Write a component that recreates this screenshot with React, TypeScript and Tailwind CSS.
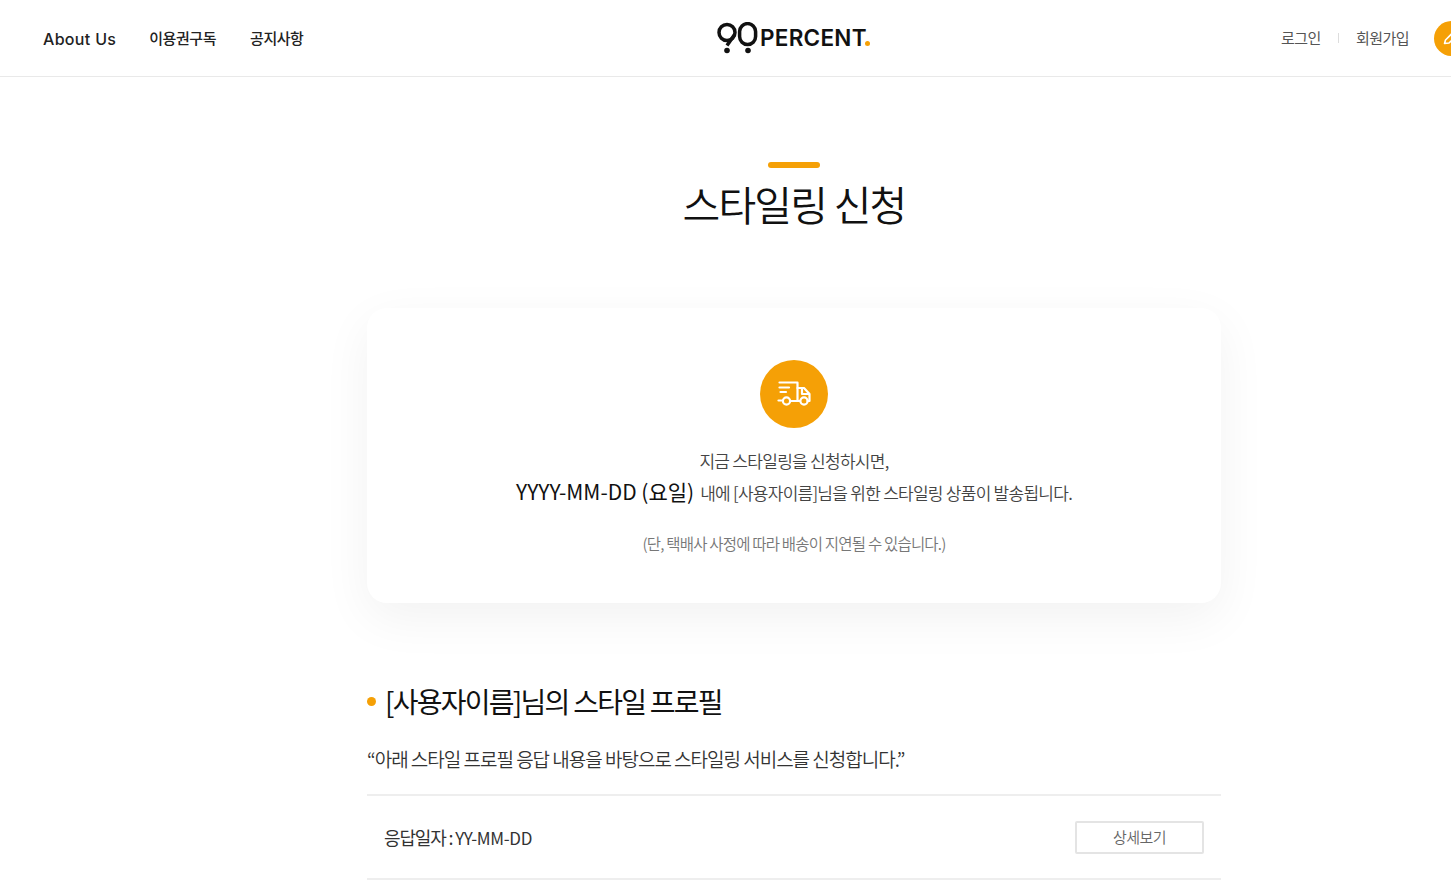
import React from "react";

const kr = "font-['Noto_Sans_CJK_KR','Noto_Sans',sans-serif]";

function Logo() {
  return (
    <div className="flex items-end">
      <svg width="42" height="32" viewBox="0 0 42 32" fill="none" className="block">
        <circle cx="10" cy="10.5" r="8" stroke="#111" strokeWidth="3.5" />
        <path d="M17.6 12.5 L10 23.5" stroke="#111" strokeWidth="3.5" />
        <circle cx="10" cy="28.5" r="2.8" fill="#111" />
        <rect x="22.6" y="1.6" width="16" height="21" rx="8" stroke="#111" strokeWidth="3.5" />
        <circle cx="31" cy="28.5" r="2.8" fill="#111" />
      </svg>
      <span className="ml-[1px] mb-[4px] text-[22.5px] leading-[24px] font-semibold tracking-[0.012em] text-[#111] font-['Inter',sans-serif]">PERCENT</span>
      <span className="mb-[8px] ml-[-2px] h-[5px] w-[5px] rounded-full bg-[#f5a006]" />
    </div>
  );
}

function TruckIcon() {
  return (
    <svg width="34" height="26" viewBox="0 0 34 26" fill="none" stroke="#fff" strokeWidth="2.2" strokeLinecap="round" strokeLinejoin="round">
      <path d="M2.5 1.5H20.5V19" />
      <path d="M2.5 6.5H12" />
      <path d="M3.5 11H9" />
      <path d="M1.5 19.5H4.5" />
      <path d="M14 20H23" />
      <path d="M20.5 7H27L32.5 13V20H30.5" />
      <path d="M25 7.5V13H32" />
      <circle cx="9.5" cy="20" r="3.6" />
      <circle cx="27" cy="20" r="3.6" />
    </svg>
  );
}

function Header() {
  return (
    <header className="relative flex h-[77px] items-center border-b border-[#e9e9e9] bg-white">
      <nav className="flex items-center pl-[43px] text-[#222]">
        <a className="font-['Inter',sans-serif] text-[16px] font-medium tracking-[0.02em] translate-y-[1px]">About Us</a>
        <a className={`${kr} ml-[33px] text-[15px] font-medium tracking-[-0.03em]`}>이용권구독</a>
        <a className={`${kr} ml-[34px] text-[15px] font-medium tracking-[-0.03em]`}>공지사항</a>
      </nav>
      <div className="absolute left-[717px] top-[22px]">
        <Logo />
      </div>
      <div className={`${kr} ml-auto flex items-center text-[15px] tracking-[-0.035em] text-[#555]`}>
        <a>로그인</a>
        <span className="mx-[17px] h-[10px] w-px bg-[#ddd]" />
        <a>회원가입</a>
        <span className="ml-[25px] mr-[-18px] flex h-[35px] w-[35px] items-center justify-start rounded-full bg-[#f5a006] pl-[9px]">
          <svg width="14" height="14" viewBox="0 0 14 14" fill="none" stroke="#fff" strokeWidth="1.6" strokeLinecap="round" strokeLinejoin="round">
            <path d="M1.5 12.5 L2.5 9 L9.5 2 C10.5 1 12 1 13 2 C14 3 14 4.5 13 5.5 L6 12 Z" />
          </svg>
        </span>
      </div>
    </header>
  );
}

export default function App() {
  return (
    <div className={`${kr} h-[893px] w-full overflow-hidden bg-white`}>
      <Header />

      <main className="ml-[367px] flex w-[854px] flex-col">
        <div className="mx-auto mt-[85px] h-[6px] w-[52px] rounded-full bg-[#f5a006]" />
        <h1 className="mt-[5px] text-center text-[41px] font-[350] leading-[60px] tracking-[-0.043em] text-[#111]">스타일링 신청</h1>

        <section className="mt-[75px] flex h-[295px] flex-col items-center rounded-[20px] bg-white pt-[52px] shadow-[0_15px_50px_rgba(0,0,0,0.055)]">
          <div className="flex h-[68px] w-[68px] items-center justify-center rounded-full bg-[#f5a006]">
            <TruckIcon />
          </div>
          <p className="mt-[19px] text-[17px] font-[350] leading-[28px] tracking-[-0.042em] text-[#444]">지금 스타일링을 신청하시면,</p>
          <p className="mt-[-1px] flex items-baseline text-[17px] font-[350] leading-[34px] tracking-[-0.043em] text-[#444]">
            <span className="mr-[6px] text-[21px] font-normal tracking-normal text-[#111]">YYYY-MM-DD (요일)</span>
            내에 [사용자이름]님을 위한 스타일링 상품이 발송됩니다.
          </p>
          <p className="mt-[21px] text-[15.5px] font-[350] leading-[24px] tracking-[-0.052em] text-[#777]">(단, 택배사 사정에 따라 배송이 지연될 수 있습니다.)</p>
        </section>

        <h2 className="mt-[76px] flex items-center text-[28px] font-normal leading-[44px] tracking-[-0.062em] text-[#111]">
          <span className="mr-[9px] h-[9px] w-[9px] rounded-full bg-[#f5a006]" />
          [사용자이름]님의 스타일 프로필
        </h2>
        <p className="mt-[20px] text-[19px] font-[350] leading-[32px] tracking-[-0.053em] text-[#333]">“아래 스타일 프로필 응답 내용을 바탕으로 스타일링 서비스를 신청합니다.”</p>

        <div className="mt-[19px] flex h-[86px] items-center justify-between border-y-2 border-[#eee] pl-[17px] pr-[17px]">
          <span className="text-[18px] font-normal tracking-[-0.065em] text-[#333]">
            응답일자 : <span className="text-[17px] tracking-[-0.02em]">YY-MM-DD</span>
          </span>
          <button className="h-[33px] w-[129px] rounded-[2px] border-2 border-[#e4e4e4] bg-white text-[15px] font-[350] tracking-[-0.04em] text-[#666]">상세보기</button>
        </div>
      </main>
    </div>
  );
}
